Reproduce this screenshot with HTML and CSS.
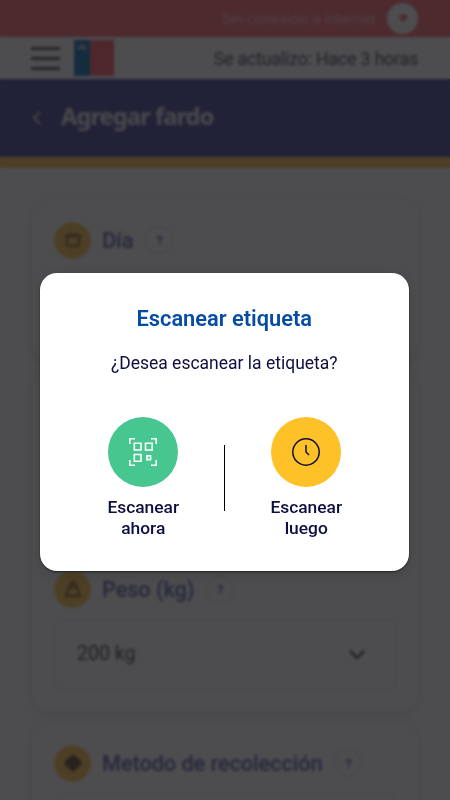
FILE: index.html
```html
<!DOCTYPE html>
<html lang="es">
<head>
<meta charset="utf-8">
<title>Agregar fardo</title>
<link rel="stylesheet" href="styles.css">
</head>
<body>
<div class="page">
  <div class="offline">
    <span>Sin conexión a internet</span>
    <span class="offline-icon"><svg width="14" height="14" viewBox="0 0 14 14"><path d="M2 4Q7 1 12 4L7 11Z"/><path class="slash" d="M2 2L12 12"/></svg></span>
  </div>
  <header class="topbar">
    <div class="burger"><i></i><i></i><i></i></div>
    <svg class="flag" width="40" height="36" viewBox="0 0 40 36"><path fill="#3f8fc4" d="M0 0H16V36H0z"/><path fill="#ff8088" d="M16 0H40V36H16z"/><path fill="#aac0cc" d="M3 6L6 5 8 3 10 5 13 6 12 10H4z"/></svg>
    <span class="updated">Se actualizo: Hace 3 horas</span>
  </header>
  <div class="heading">
    <svg width="12" height="16" viewBox="0 0 12 16"><path d="M10 2L4 8L10 14"/></svg>
    <h1>Agregar fardo</h1>
  </div>
  <main>
    <section class="card day">
      <div class="label">
        <span class="badge"><svg width="18" height="18" viewBox="0 0 18 18"><rect x="3" y="4" width="12" height="11" rx="2"/><path d="M1 5H17"/></svg></span>
        <h2>Día</h2><span class="help">?</span>
      </div>
    </section>
    <section class="card weight">
      <div class="label">
        <span class="badge"><svg width="18" height="18" viewBox="0 0 18 18"><path d="M5 7H13L16 16H2Z"/><circle cx="9" cy="4.5" r="2.5"/></svg></span>
        <h2>Peso (kg)</h2><span class="help">?</span>
      </div>
      <div class="select"><span>200 kg</span><svg width="16" height="12" viewBox="0 0 16 12"><path d="M1 2L8 9L15 2"/></svg></div>
    </section>
    <section class="card method">
      <div class="label">
        <span class="badge"><svg width="20" height="20" viewBox="0 0 20 20"><path class="solid" d="M10 1L13 4 16 6 19 10 16 14 13 16 10 19 7 16 4 14 1 10 4 6 7 4Z"/></svg></span>
        <h2>Metodo de recolección</h2><span class="help">?</span>
      </div>
      <div class="select"></div>
    </section>
  </main>
</div>
<div class="overlay">
  <div class="dialog" role="dialog">
    <h3>Escanear etiqueta</h3>
    <p>¿Desea escanear la etiqueta?</p>
    <div class="options">
      <div class="option">
        <span class="circle green"><svg width="28" height="28" viewBox="0 0 28 28"><path d="M.8 6V.8H6M22 .8H27.2V6M27.2 22V27.2H22M6 27.2H.8V22M5.3 5.3H12V12H5.3ZM16.5 5.3H23.2V12H16.5ZM5.3 16.5H12V23.2H5.3ZM17.9 17.9H21.6V21.6H17.9Z"/></svg></span>
        <span>Escanear<br>ahora</span>
      </div>
      <i class="divider"></i>
      <div class="option">
        <span class="circle yellow"><svg width="28" height="28" viewBox="0 0 28 28"><circle cx="14" cy="14" r="13.2"/><path d="M14 7V14L17 17"/></svg></span>
        <span>Escanear<br>luego</span>
      </div>
    </div>
  </div>
</div>
</body>
</html>
```
FILE: styles.css
```css
* { box-sizing: border-box; }
body { margin: 0; width: 450px; height: 800px; overflow: hidden; background: #fff; font-family: Roboto, sans-serif; }
h1, h2, h3, p { margin: 0; }
svg { display: block; fill: none; flex: none; }
.page { height: 800px; overflow: hidden; background: #fff; }
.offline { height: 37px; background: #ff8a8e; display: flex; align-items: center; justify-content: flex-end; gap: 11px; padding-right: 32px; color: #ffd0d3; font-size: 15px; letter-spacing: .1px; }
.offline-icon { width: 31px; height: 31px; border-radius: 50%; background: #fff; display: grid; place-items: center; }
.offline-icon path { fill: #f37880; }
.offline-icon .slash { stroke: #fff; }
.topbar { height: 42px; display: flex; align-items: center; padding: 0 32px 0 31px; }
.burger { width: 29px; display: grid; gap: 7px; }
.burger i { height: 3px; background: #777; }
.flag { margin-left: 14px; }
.updated { margin-left: auto; color: #74757c; font-size: 18px; letter-spacing: -.28px; }
.heading { height: 89px; padding: 0 30px 4px; display: flex; align-items: center; gap: 19px; background: #6d6fab; border-bottom: 11px solid #ffd070; }
.heading svg { margin-top: 3px; stroke: #ddd; stroke-width: 2; }
.heading h1 { color: #ededf2; font: 700 23.5px/30px "Noto Sans", sans-serif; letter-spacing: -.85px; }
main { padding: 32px 32px 0; display: grid; gap: 12px; }
.card { border-radius: 18px; background: #fff; box-shadow: 0 2px 12px #0000001a; padding: 21px 22px; }
.day { height: 160px; }
.weight { height: 339px; display: flex; flex-direction: column; justify-content: flex-end; }
.method { height: 150px; }
.label { height: 38px; display: flex; align-items: center; }
.badge { width: 37px; height: 37px; border-radius: 50%; background: #ffd070; display: grid; place-items: center; }
.badge svg { stroke: #947f55; stroke-width: 2; }
.badge .solid { fill: #806e55; stroke: none; }
.label h2 { margin-left: 11px; color: #7f80b4; font-size: 21.6px; font-weight: 500; }
.help { width: 28px; height: 28px; margin-left: 12px; border: 1px solid #ddd; border-radius: 50%; display: grid; place-items: center; color: #8888b2; font-size: 13px; font-weight: 700; }
.select { height: 70px; margin-top: 12px; padding: 0 30px 4px 22px; border: 1px solid #e5e5e5; border-radius: 8px; display: flex; align-items: center; justify-content: space-between; color: #6c6c6c; font-size: 19.5px; }
.select svg { margin-top: 3px; stroke: #777; stroke-width: 2.5; }
.overlay { position: absolute; inset: 0; padding: 273px 0 0 39.5px; background: rgba(1, 2, 5, .7); backdrop-filter: blur(1.5px); }
.dialog { width: 369.5px; height: 297.5px; padding-top: 31.5px; border-radius: 17px; background: #fff; text-align: center; color: #0c0f40; box-shadow: 0 1px 2px #0008, 0 3px 12px #0002; }
.dialog h3 { color: #064ca5; font-size: 21.8px; line-height: 28px; font-weight: 600; }
.dialog p { margin-top: 18.5px; font-size: 17.5px; line-height: 24px; }
.options { margin-top: 41.5px; padding-left: 1px; display: flex; justify-content: center; }
.option { width: 81px; font-size: 17.4px; line-height: 20.5px; font-weight: 500; display: flex; flex-direction: column; align-items: center; gap: 10.5px; }
.circle { width: 70px; height: 70px; border-radius: 50%; display: grid; place-items: center; }
.green { background: #48c690; }
.green svg { stroke: #fff; stroke-width: 1.6; }
.yellow { background: #ffc128; }
.yellow svg { stroke: #0c0f40; stroke-width: 1.5; }
.divider { width: 1px; height: 66px; margin: 28px 40.5px 0; background: #000; }
```
